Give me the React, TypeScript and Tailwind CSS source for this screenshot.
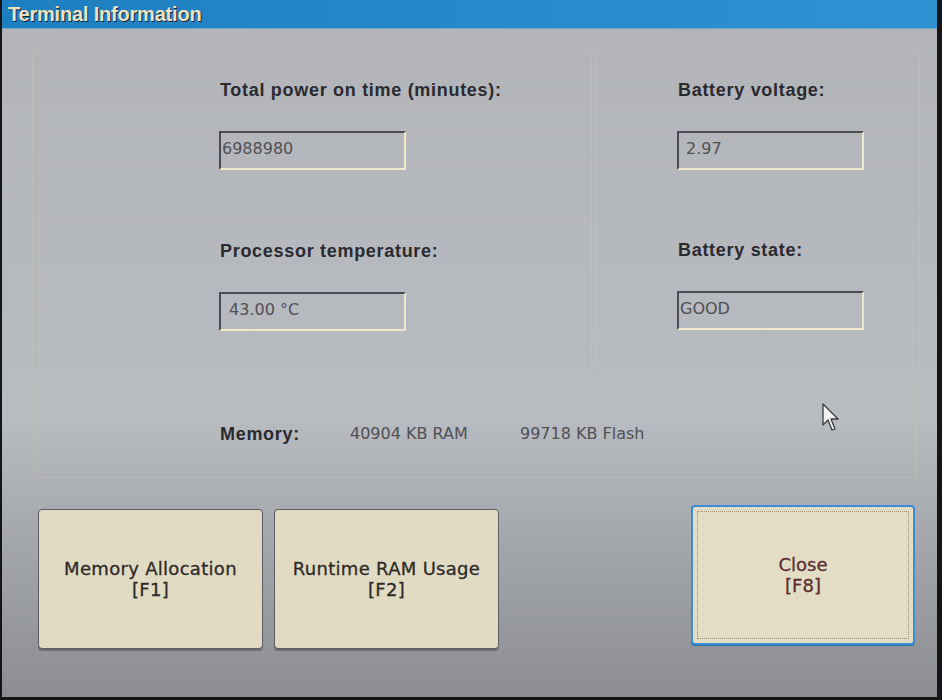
import React from 'react';

const LABEL = "font-['Liberation_Sans',Arial,sans-serif] font-bold text-[18px] tracking-[0.7px] leading-5 text-[#2a2a30]";
const VALUE = "font-['DejaVu_Sans',sans-serif] text-[16px] text-[#505055]";

function Field({ value, className = '' }: { value: string; className?: string }) {
  return (
    <div
      className={
        'w-[187px] h-[39px] -ml-[1px] border-2 border-t-[#4b4b55] border-l-[#4b4b55] border-b-[#eee7c9] border-r-[#eee7c9] flex items-center pb-[4px] ' +
        VALUE +
        ' ' +
        className
      }
    >
      {value}
    </div>
  );
}

function Button({ title, keyName, focused = false }: { title: string; keyName: string; focused?: boolean }) {
  if (focused) {
    return (
      <div className="w-[224px] h-[140px] rounded-[4px] border-2 border-[#3b8ed4] bg-[#e3ddc6] p-[4px] shadow-[0_1px_0_#2a6ea8]">
        <div className="h-full border border-dotted border-[#9c8c70] flex flex-col items-center justify-center font-['DejaVu_Sans',sans-serif] text-[18px] leading-[21px] text-[#5a2e2e] [-webkit-text-stroke:0.3px_#5a2e2e]">
          <span>{title}</span>
          <span>[{keyName}]</span>
        </div>
      </div>
    );
  }
  return (
    <div className="w-[225px] h-[140px] rounded-[4px] border border-[#5c5c63] bg-[#e1dbc3] shadow-[0_2px_0_#6d6e72] flex flex-col items-center justify-center font-['DejaVu_Sans',sans-serif] text-[18px] leading-[21px] tracking-[0.3px] text-[#2e2a28] [-webkit-text-stroke:0.3px_#2e2a28]">
      <span>{title}</span>
      <span>[{keyName}]</span>
    </div>
  );
}

export default function App() {
  return (
    <div className="w-[942px] h-[700px] bg-[#151518] flex overflow-hidden">
      <div className="relative ml-[2px] w-[935px] h-[697px] flex flex-col bg-linear-to-b from-[#b2b4b8] via-[#b8bbc0] via-60% to-[#8b8d91]">
        {/* Title bar */}
        <div className="h-[29px] shrink-0 bg-linear-to-r from-[#1d7fc0] to-[#2e93d3] flex items-center pl-[6px] border-b border-[#6aa9d4]">
          <span className="font-['Liberation_Sans',Arial,sans-serif] font-bold text-[20px] tracking-[-0.2px] text-[#ece3c2] [text-shadow:1px_1px_0_#1b2430]">
            Terminal Information
          </span>
        </div>

        {/* Info panels */}
        <div className="mt-[21px] ml-[30px] mr-[17px] flex h-[322px]">
          <div className="w-[560px] flex flex-col border border-[#d4cca8]/30">
            <div className="h-[167px] border-b border-[#d4cca8]/30 pl-[187px] pt-[29px] flex flex-col">
              <span className={LABEL}>Total power on time (minutes):</span>
              <Field value="6988980" className="mt-[31px] pl-[1px]" />
            </div>
            <div className="flex-1 pl-[187px] pt-[23px] flex flex-col">
              <span className={LABEL}>Processor temperature:</span>
              <Field value="43.00 °C" className="mt-[31px] pl-[8px]" />
            </div>
          </div>
          <div className="ml-[3px] flex-1 border border-[#d4cca8]/30 pl-[82px] pt-[29px] flex flex-col">
            <span className={LABEL}>Battery voltage:</span>
            <Field value="2.97" className="mt-[31px] pl-[7px]" />
            <span className={LABEL + ' mt-[70px]'}>Battery state:</span>
            <Field value="GOOD" className="mt-[31px] pl-[1px]" />
          </div>
        </div>

        {/* Memory */}
        <div className="mt-[13px] ml-[32px] mr-[20px] h-[93px] border border-[#d4cca8]/30 flex items-center pl-[185px] pt-[4px]">
          <span className={LABEL + ' w-[130px]'}>Memory:</span>
          <span className={VALUE + ' w-[170px] text-[#47474c]'}>40904 KB RAM</span>
          <span className={VALUE + ' text-[#47474c]'}>99718 KB Flash</span>
        </div>

        {/* Buttons */}
        <div className="mt-[27px] ml-[36px] mr-[22px] flex items-start">
          <div className="mt-[4px] flex gap-[11px]">
            <Button title="Memory Allocation" keyName="F1" />
            <Button title="Runtime RAM Usage" keyName="F2" />
          </div>
          <div className="ml-auto">
            <Button title="Close" keyName="F8" focused />
          </div>
        </div>

        {/* Mouse pointer */}
        <svg className="absolute left-[820px] top-[403px]" width="20" height="30" viewBox="0 0 20 30">
          <path d="M1 1 L1 22 L6 17 L10 27 L13 26 L9 16 L16 16 Z" fill="#f2f2f0" stroke="#3a3a40" strokeWidth="1.3" strokeLinejoin="round" />
        </svg>
      </div>
    </div>
  );
}
